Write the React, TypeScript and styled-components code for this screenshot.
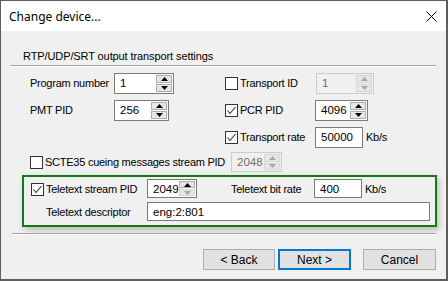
import React from 'react';
import styled, { createGlobalStyle } from 'styled-components';

const GlobalStyle = createGlobalStyle`
  html, body {
    margin: 0;
    padding: 0;
    background: #5e5e5e;
  }
  body {
    width: 448px;
    height: 281px;
    overflow: hidden;
    font-family: 'Liberation Sans', Arial, sans-serif;
    font-size: 11px;
    letter-spacing: -0.25px;
    color: #000;
  }
`;

const Window = styled.div`
  display: flex;
  flex-direction: column;
  width: 445px;
  height: 278px;
  margin: 1px 0 0 1px;
  background: #f0f0f0;
`;

const TitleBar = styled.div`
  display: flex;
  align-items: center;
  justify-content: space-between;
  height: 30px;
  padding: 0 9px 0 8px;
  background: #fff;
`;

const Title = styled.span`
  font-family: 'Noto Sans', 'Open Sans', sans-serif;
  font-size: 12px;
  letter-spacing: 0;
`;

const Content = styled.div`
  display: flex;
  flex-direction: column;
  padding-top: 18px;
`;

const GroupLabel = styled.div`
  height: 14px;
  line-height: 14px;
  padding-left: 22px;
  letter-spacing: -0.1px;
`;

const Separator = styled.div<{ $left: number; $width: number; $top: number }>`
  margin: ${(p) => p.$top}px 0 0 ${(p) => p.$left}px;
  width: ${(p) => p.$width}px;
  height: 1px;
  background: #a0a0a0;
  border-bottom: 1px solid #fff;
`;

const Form = styled.div`
  display: grid;
  grid-template-columns: 195px 1fr;
  grid-template-rows: 27px 27px 25px 20px;
  padding: 6px 0 0 29px;
`;

const Cell = styled.div<{ $span?: boolean }>`
  display: flex;
  align-items: flex-start;
  height: 21px;
  grid-column: ${(p) => (p.$span ? '1 / 3' : 'auto')};
`;

const Label = styled.span<{ $width?: number; $gap?: number }>`
  display: inline-block;
  width: ${(p) => (p.$width ? `${p.$width}px` : 'auto')};
  margin-left: ${(p) => p.$gap ?? 0}px;
  line-height: 21px;
  white-space: nowrap;
  flex-shrink: 0;
`;

const CheckBox = styled.span`
  display: inline-flex;
  box-sizing: border-box;
  width: 13px;
  height: 13px;
  margin: 4px 2px 0 0;
  border: 1px solid #333;
  background: #fff;
  flex-shrink: 0;
`;

const Field = styled.div<{ $width: number; $height?: number; $disabled?: boolean }>`
  display: flex;
  box-sizing: border-box;
  width: ${(p) => p.$width}px;
  height: ${(p) => p.$height ?? 21}px;
  border: 1px solid ${(p) => (p.$disabled ? '#cccccc' : '#7a7a7a')};
  background: ${(p) => (p.$disabled ? '#f0f0f0' : '#fff')};
  color: ${(p) => (p.$disabled ? '#6d6d6d' : '#000')};
  flex-shrink: 0;
`;

const FieldText = styled.span`
  flex: 1;
  padding-left: 5px;
  font-size: 11.5px;
  letter-spacing: 0;
  line-height: 19px;
  white-space: nowrap;
  overflow: hidden;
`;

const Spin = styled.div`
  display: flex;
  flex-direction: column;
  width: 16px;
  padding: 1px 1px 1px 0;
  gap: 1px;
`;

const SpinButton = styled.div<{ $disabled?: boolean }>`
  flex: 1;
  display: flex;
  align-items: center;
  justify-content: center;
  background: #e6e6e6;
  border: 1px solid ${(p) => (p.$disabled ? '#d6d6d6' : '#adadad')};
  color: ${(p) => (p.$disabled ? '#a6a6a6' : '#000')};
`;

const Unit = styled.span`
  margin-left: 3px;
  line-height: 21px;
`;

const Highlight = styled.div`
  display: flex;
  flex-direction: column;
  gap: 4px;
  box-sizing: border-box;
  width: 415px;
  height: 52px;
  margin: 3px 0 0 21px;
  padding: 2px 0 0 7px;
  border: 2px solid #157a15;
  box-shadow: 2px 3px 6px rgba(0, 0, 0, 0.22);
`;

const HRow = styled.div<{ $indent?: number }>`
  display: flex;
  align-items: flex-start;
  height: 19px;
  padding-left: ${(p) => p.$indent ?? 0}px;
`;

const Buttons = styled.div`
  display: flex;
  margin: 14px 0 0 202px;
`;

const Button = styled.div<{ $width: number; $default?: boolean; $gap?: number }>`
  display: flex;
  align-items: center;
  justify-content: center;
  box-sizing: border-box;
  width: ${(p) => p.$width}px;
  height: 21px;
  margin-left: ${(p) => p.$gap ?? 0}px;
  background: #e1e1e1;
  border: ${(p) => (p.$default ? '2px solid #0078d7' : '1px solid #adadad')};
  font-size: 12px;
  letter-spacing: 0;
`;

const Arrow = ({ up }: { up?: boolean }) => (
  <svg width="7" height="4" viewBox="0 0 7 4">
    <path d={up ? 'M0 4 L3.5 0 L7 4 Z' : 'M0 0 L3.5 4 L7 0 Z'} fill="currentColor" />
  </svg>
);

const Check = ({ checked }: { checked?: boolean }) => (
  <CheckBox>
    {checked && (
      <svg width="11" height="11" viewBox="0 0 11 11">
        <path d="M1.5 5.5 L4 8.5 L9.5 2" fill="none" stroke="#333" strokeWidth="1.1" />
      </svg>
    )}
  </CheckBox>
);

type SpinProps = {
  value: string;
  width: number;
  height?: number;
  disabled?: boolean;
  downDisabled?: boolean;
};

const SpinField = ({ value, width, height, disabled, downDisabled }: SpinProps) => (
  <Field $width={width} $height={height} $disabled={disabled}>
    <FieldText>{value}</FieldText>
    <Spin>
      <SpinButton $disabled={disabled}>
        <Arrow up />
      </SpinButton>
      <SpinButton $disabled={disabled || downDisabled}>
        <Arrow />
      </SpinButton>
    </Spin>
  </Field>
);

const CloseIcon = () => (
  <svg width="11" height="11" viewBox="0 0 11 11">
    <path d="M0.5 0.5 L10.5 10.5 M10.5 0.5 L0.5 10.5" stroke="#000" strokeWidth="1" />
  </svg>
);

const App = () => (
  <>
    <GlobalStyle />
    <Window>
      <TitleBar>
        <Title>Change device...</Title>
        <CloseIcon />
      </TitleBar>
      <Content>
        <GroupLabel>RTP/UDP/SRT output transport settings</GroupLabel>
        <Separator $left={9} $width={426} $top={2} />
        <Form>
          <Cell>
            <Label $width={84}>Program number</Label>
            <SpinField value="1" width={60} />
          </Cell>
          <Cell>
            <Check />
            <Label $width={76}>Transport ID</Label>
            <SpinField value="1" width={58} disabled />
          </Cell>
          <Cell>
            <Label $width={84}>PMT PID</Label>
            <SpinField value="256" width={55} />
          </Cell>
          <Cell>
            <Check checked />
            <Label $width={75}>PCR PID</Label>
            <SpinField value="4096" width={53} />
          </Cell>
          <Cell />
          <Cell>
            <Check checked />
            <Label $width={75}>Transport rate</Label>
            <Field $width={48}>
              <FieldText>50000</FieldText>
            </Field>
            <Unit>Kb/s</Unit>
          </Cell>
          <Cell $span>
            <Check />
            <Label $width={186}>SCTE35 cueing messages stream PID</Label>
            <SpinField value="2048" width={51} height={20} disabled />
          </Cell>
        </Form>
        <Highlight>
          <HRow>
            <Check checked />
            <Label $width={101}>Teletext stream PID</Label>
            <SpinField value="2049" width={50} height={19} downDisabled />
            <Label $width={83} $gap={34}>
              Teletext bit rate
            </Label>
            <Field $width={48} $height={19}>
              <FieldText>400</FieldText>
            </Field>
            <Unit>Kb/s</Unit>
          </HRow>
          <HRow $indent={15}>
            <Label $width={101}>Teletext descriptor</Label>
            <Field $width={283} $height={19}>
              <FieldText>eng:2:801</FieldText>
            </Field>
          </HRow>
        </Highlight>
        <Separator $left={11} $width={424} $top={6} />
        <Buttons>
          <Button $width={72}>&lt; Back</Button>
          <Button $width={73} $gap={3} $default>
            Next &gt;
          </Button>
          <Button $width={73} $gap={12}>
            Cancel
          </Button>
        </Buttons>
      </Content>
    </Window>
  </>
);

export default App;
